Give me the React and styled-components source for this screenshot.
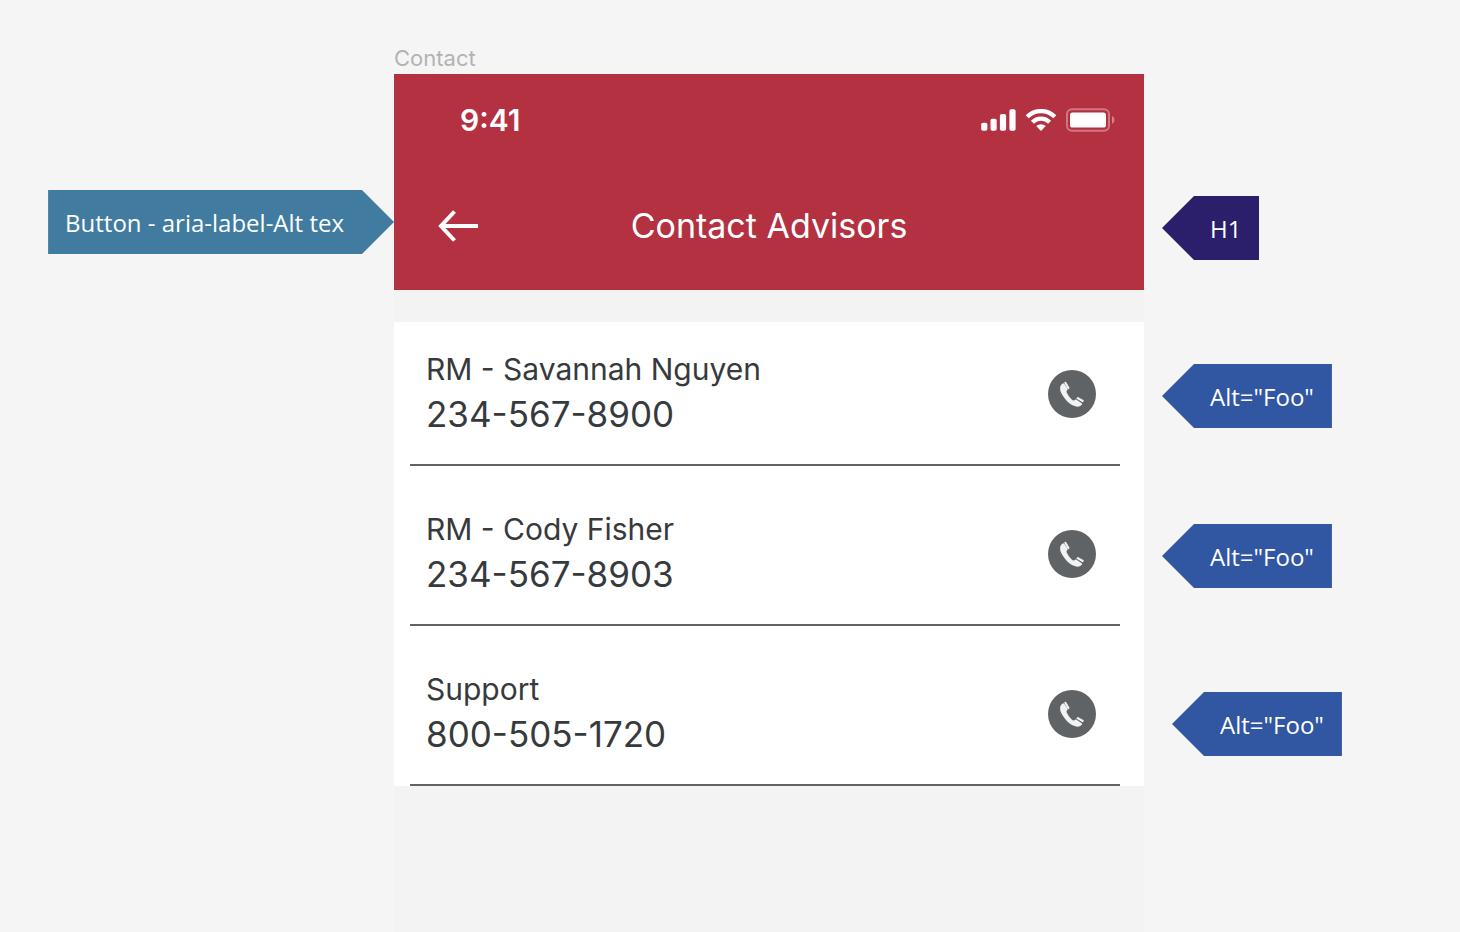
import React from "react";
import styled, { createGlobalStyle } from "styled-components";

const GlobalStyle = createGlobalStyle`
    * {
        box-sizing: border-box;
    }
    body {
        margin: 0;
        background-color: #f5f5f5;
        font-family: Inter, "Liberation Sans", sans-serif;
    }
    h1, p, ul {
        margin: 0;
        padding: 0;
    }
`;

const Board = styled.div`
    display: grid;
    grid-template-columns: 394px minmax(0, 1fr) 316px;
    min-height: 100vh;
`;

const NotesLeft = styled.aside`
    display: flex;
    flex-direction: column;
    align-items: flex-end;
    padding-top: 190px;
`;

const NotesRight = styled.aside`
    display: flex;
    flex-direction: column;
    align-items: flex-start;
    padding: 196px 0 0 18px;
`;

const Note = styled.div`
    height: 64px;
    margin-top: ${({ $space }) => $space || 0}px;
    margin-left: ${({ $indent }) => $indent || 0}px;
    padding: ${({ $point }) => ($point === "right" ? "0 50px 0 17px" : "0 18px 0 48px")};
    background-color: ${({ $color }) => $color};
    clip-path: ${({ $point }) =>
        $point === "right"
            ? "polygon(0 0, calc(100% - 32px) 0, 100% 50%, calc(100% - 32px) 100%, 0 100%)"
            : "polygon(32px 0, 100% 0, 100% 100%, 32px 100%, 0 50%)"};
    color: white;
    font-family: "Open Sans", "Noto Sans", sans-serif;
    font-size: 24px;
    line-height: 66px;
    white-space: nowrap;
`;

const Frame = styled.section`
    display: flex;
    flex-direction: column;
`;

const FrameLabel = styled.p`
    padding: 44px 0 2px;
    color: #b3b3b3;
    font-size: 22px;
    line-height: 28px;
`;

const Screen = styled.main`
    flex: 1;
    background-color: #f3f3f3;
`;

const Header = styled.header`
    background-color: #b33141;
    color: white;
`;

const StatusBar = styled.div`
    display: flex;
    align-items: center;
    justify-content: space-between;
    height: 88px;
    padding: 4px 29px 0 66px;
    font-size: 30px;
    font-weight: 600;
    line-height: 34px;
`;

const StatusIcons = styled.div`
    display: flex;
    align-items: center;
    gap: 9px;
`;

const NavBar = styled.div`
    display: grid;
    grid-template-columns: 40px 1fr 40px;
    align-items: center;
    height: 128px;
    padding: 0 44px;
`;

const BackButton = styled.button`
    display: flex;
    padding: 0;
    border: 0;
    background: none;
    color: white;
    cursor: pointer;
`;

const Title = styled.h1`
    font-size: 34px;
    font-weight: 400;
    line-height: 40px;
    text-align: center;
`;

const ContactList = styled.ul`
    margin-top: 32px;
    padding: 0 24px 0 16px;
    background-color: white;
    list-style: none;
`;

const ContactItem = styled.li`
    display: flex;
    align-items: center;
    justify-content: space-between;
    padding: 43px 24px 25px 16px;
    border-bottom: 2px solid #606366;
    color: #373a3c;

    &:first-child {
        padding-top: 27px;
    }
`;

const Name = styled.p`
    font-size: 30px;
    line-height: 40px;
`;

const Number = styled.p`
    font-size: 35px;
    line-height: 50px;
`;

const CallButton = styled.button`
    display: flex;
    width: 48px;
    height: 48px;
    padding: 0;
    border: 0;
    border-radius: 50%;
    background-color: #606366;
    cursor: pointer;
`;

const contacts = [
    { name: "RM - Savannah Nguyen", number: "234-567-8900" },
    { name: "RM - Cody Fisher", number: "234-567-8903" },
    { name: "Support", number: "800-505-1720" },
];

const SignalIcon = () => (
    <svg width="35" height="22" viewBox="0 0 35 22" fill="currentColor" aria-hidden="true">
        <rect x="0.2" y="13.8" width="6.2" height="8" rx="1.8" />
        <rect x="9.5" y="9.8" width="6.2" height="12" rx="1.8" />
        <rect x="18.9" y="5" width="6.2" height="16.8" rx="1.8" />
        <rect x="28.4" y="0.3" width="6.2" height="21.5" rx="1.8" />
    </svg>
);

const WifiIcon = () => (
    <svg width="32" height="22" viewBox="0 0 32 22" aria-hidden="true">
        <g fill="none" stroke="currentColor" strokeWidth="4.2">
            <path d="M2.2 7.8a19.4 19.4 0 0 1 27.6 0" />
            <path d="M7.400 13.300a12 12 0 0 1 17.200 0" />
        </g>
        <path fill="currentColor" d="M16 22l-4.800-4.900a7.200 7.200 0 0 1 9.600 0z" />
    </svg>
);

const BatteryIcon = () => (
    <svg width="49" height="24" viewBox="0 0 49 24" aria-hidden="true">
        <rect x="1" y="1.300" width="42" height="21.400" rx="5" fill="none" stroke="currentColor" strokeOpacity=".35" strokeWidth="2" />
        <path fill="currentColor" fillOpacity=".4" d="M46 8v8a4.400 4.400 0 0 0 0-8z" />
        <rect x="4" y="4.500" width="36" height="15" rx="2.600" fill="currentColor" />
    </svg>
);

const BackIcon = () => (
    <svg width="40" height="32" viewBox="0 0 40 32" fill="none" stroke="currentColor" strokeWidth="4" aria-hidden="true">
        <path d="M40 16H3M16.5 1.5L3 16l13.500 14.500" />
    </svg>
);

const PhoneIcon = () => (
    <svg width="48" height="48" viewBox="0 0 48 48" fill="#f2f2f2" aria-hidden="true">
        <path d="M14.800 13.400C11.500 15.200 11.400 19.300 13.700 23.800c2.400 4.900 7 9.700 11.500 11.800 3.200 1.500 6.600 1.500 8.600-.9.400-.5.300-1.200-.2-1.500l-5-3.400c-.6-.4-1.100-.2-1.600.2-1.100.7-2.100.5-3.200-.5-2-1.900-3.900-4.300-4.900-6.700-.5-1.200-.4-2 .4-2.800.5-.5.500-1 .2-1.500l-3.300-4.700c-.3-.5-.8-.7-1.400-.4z" />
        <path d="M16.100 12.800l.9-.8c.4-.4.9-.3 1.200.2l3.200 5.300c.2.400.2.700-.1 1l-1.100 1z" />
        <path d="M28.300 28.600l.8-1.200c.3-.400.7-.500 1.200-.2l5 2.700c.5.300.600.600.4 1.100l-.8 1.500z" />
    </svg>
);

export default function App() {
    return (
        <>
            <GlobalStyle />
            <Board>
                <NotesLeft>
                    <Note $point="right" $color="#417ca0">Button - aria-label-Alt tex</Note>
                </NotesLeft>
                <Frame>
                    <FrameLabel>Contact</FrameLabel>
                    <Screen>
                        <Header>
                            <StatusBar>
                                <span>9:41</span>
                                <StatusIcons>
                                    <SignalIcon />
                                    <WifiIcon />
                                    <BatteryIcon />
                                </StatusIcons>
                            </StatusBar>
                            <NavBar>
                                <BackButton type="button" aria-label="Back">
                                    <BackIcon />
                                </BackButton>
                                <Title>Contact Advisors</Title>
                            </NavBar>
                        </Header>
                        <ContactList>
                            {contacts.map(({ name, number }) => (
                                <ContactItem key={number}>
                                    <div>
                                        <Name>{name}</Name>
                                        <Number>{number}</Number>
                                    </div>
                                    <CallButton type="button" aria-label={`Call ${name}`}>
                                        <PhoneIcon />
                                    </CallButton>
                                </ContactItem>
                            ))}
                        </ContactList>
                    </Screen>
                </Frame>
                <NotesRight>
                    <Note $color="#2b1f6b">H1</Note>
                    <Note $color="#3156a2" $space={104}>Alt="Foo"</Note>
                    <Note $color="#3156a2" $space={96}>Alt="Foo"</Note>
                    <Note $color="#3156a2" $space={104} $indent={10}>Alt="Foo"</Note>
                </NotesRight>
            </Board>
        </>
    );
}
